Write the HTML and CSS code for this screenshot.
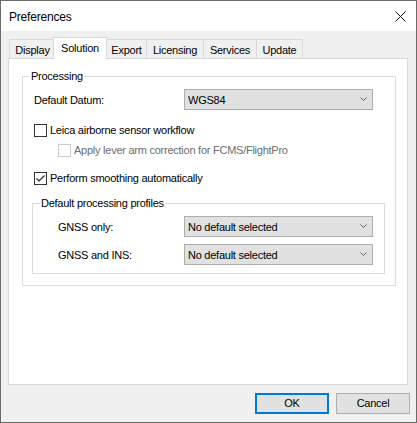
FILE: index.html
```html
<!DOCTYPE html>
<html>
<head>
<meta charset="utf-8">
<link rel="stylesheet" href="styles.css">
</head>
<body>
<div class="window">
  <div class="titlebar">
    <span class="title">Preferences</span>
    <svg class="close" width="11" height="11" viewBox="0 0 11 11"><path d="M0.5 0.5 L10.5 10.5 M10.5 0.5 L0.5 10.5" stroke="#111" stroke-width="1" fill="none"/></svg>
  </div>
  <div class="client">
    <div class="tabs">
      <div class="tab t-display">Display</div>
      <div class="tab selected t-solution">Solution</div>
      <div class="tab t-export">Export</div>
      <div class="tab t-licensing">Licensing</div>
      <div class="tab t-services">Services</div>
      <div class="tab t-update">Update</div>
    </div>
    <div class="panel">
      <fieldset class="group outer">
        <legend>Processing</legend>
        <div class="row datum">
          <span class="label label-datum">Default Datum:</span>
          <div class="combo"><span>WGS84</span><svg class="chev" width="8" height="5" viewBox="0 0 8 5"><polyline points="0.5,0.5 3.5,3.5 6.5,0.5" stroke="#5f5f5f" stroke-width="1" fill="none"/></svg></div>
        </div>
        <div class="check c-leica"><span class="box"></span><span>Leica airborne sensor workflow</span></div>
        <div class="check c-apply disabled"><span class="box"></span><span>Apply lever arm correction for FCMS/FlightPro</span></div>
        <div class="check c-perform"><span class="box checked"><svg width="11" height="11" viewBox="0 0 11 11"><polyline points="1.5,5.5 4,8 9.5,2.5" stroke="#222" stroke-width="1.1" fill="none"/></svg></span><span>Perform smoothing automatically</span></div>
        <fieldset class="group inner">
          <legend>Default processing profiles</legend>
          <div class="row prof">
            <span class="label label-prof">GNSS only:</span>
            <div class="combo"><span>No default selected</span><svg class="chev" width="8" height="5" viewBox="0 0 8 5"><polyline points="0.5,0.5 3.5,3.5 6.5,0.5" stroke="#5f5f5f" stroke-width="1" fill="none"/></svg></div>
          </div>
          <div class="row prof second">
            <span class="label label-prof">GNSS and INS:</span>
            <div class="combo"><span>No default selected</span><svg class="chev" width="8" height="5" viewBox="0 0 8 5"><polyline points="0.5,0.5 3.5,3.5 6.5,0.5" stroke="#5f5f5f" stroke-width="1" fill="none"/></svg></div>
          </div>
        </fieldset>
      </fieldset>
    </div>
    <div class="buttons">
      <button class="btn default">OK</button>
      <button class="btn">Cancel</button>
    </div>
  </div>
</div>
</body>
</html>
```

FILE: styles.css
```css
html, body {
  margin: 0;
  padding: 0;
  background: #ffffff;
}

.window {
  width: 417px;
  height: 423px;
  box-sizing: border-box;
  border: 1px solid #6b6b6b;
  background: #f0f0f0;
  display: flex;
  flex-direction: column;
  font-family: "Liberation Sans", Arial, sans-serif;
  font-size: 11px;
  letter-spacing: -0.25px;
  color: #000;
}

.titlebar {
  height: 30px;
  flex: none;
  background: #ffffff;
  display: flex;
  align-items: center;
  justify-content: space-between;
  padding: 0 10px 0 8px;
}

.title {
  font-size: 12px;
  line-height: 14px;
  letter-spacing: -0.2px;
  margin-top: 1px;
}

.close {
  display: block;
}

.client {
  flex: 1;
  display: flex;
  flex-direction: column;
  padding: 8px 8px 0 7px;
}

.tabs {
  display: flex;
  align-items: flex-end;
  height: 19px;
  padding-left: 1px;
}

.tab {
  box-sizing: border-box;
  height: 19px;
  border: 1px solid #d9d9d9;
  border-bottom: none;
  background: #f0f0f0;
  margin-left: -1px;
  text-align: center;
  line-height: 13px;
  padding-top: 4px;
}

.t-display { width: 47px; margin-left: 0; }
.t-solution { width: 54px; }
.t-export { width: 41px; }
.t-licensing { width: 58px; }
.t-services { width: 54px; }
.t-update { width: 47px; }

.tab.selected {
  height: 22px;
  margin-left: -3px;
  margin-bottom: -1px;
  background: #ffffff;
  position: relative;
  z-index: 1;
  padding-top: 4px;
}

.panel {
  height: 327px;
  box-sizing: border-box;
  background: #ffffff;
  border: 1px solid #d9d9d9;
  padding: 11px 11px 0 13px;
}

.group {
  margin: 0;
  border: 1px solid #dcdcdc;
  min-width: 0;
}

.group legend {
  padding: 0 1px;
  line-height: 13px;
  font-size: 11px;
}

.outer {
  padding: 6px 10px 11px 7px;
}

.inner {
  margin: 12px 0 0 2px;
  padding: 6px 0 8px 7px;
}

.row {
  display: flex;
  align-items: center;
  height: 21px;
}

.datum { margin-left: 4px; }
.label-datum { width: 150px; }

.prof { margin-left: 18px; }
.prof.second { margin-top: 7px; }
.label-prof { width: 126px; }

.combo {
  width: 189px;
  height: 21px;
  box-sizing: border-box;
  border: 1px solid #adadad;
  background: #e1e1e1;
  display: flex;
  align-items: center;
  justify-content: space-between;
  padding: 0 4px 0 3px;
}

.chev { display: block; }

.check {
  display: flex;
  align-items: center;
  height: 13px;
  line-height: 13px;
}

.c-leica { margin: 14px 0 0 4px; }
.c-apply { margin: 7px 0 0 28px; }
.c-perform { margin: 15px 0 0 4px; }

.box {
  width: 13px;
  height: 13px;
  box-sizing: border-box;
  border: 1px solid #333333;
  background: #ffffff;
  margin-right: 3px;
  flex: none;
  display: flex;
  align-items: center;
  justify-content: center;
}

.disabled { color: #6d6d6d; }
.disabled .box { border-color: #cccccc; }

.buttons {
  display: flex;
  justify-content: flex-end;
  gap: 7px;
  margin: 8px -2px 0 0;
}

.btn {
  width: 74px;
  height: 21px;
  box-sizing: border-box;
  border: 1px solid #adadad;
  background: #e1e1e1;
  font-family: "Liberation Sans", Arial, sans-serif;
  font-size: 11px;
  letter-spacing: -0.25px;
  color: #000;
  padding: 0;
  margin: 0;
  line-height: 13px;
}

.btn.default {
  border: 2px solid #0078d7;
}
```
